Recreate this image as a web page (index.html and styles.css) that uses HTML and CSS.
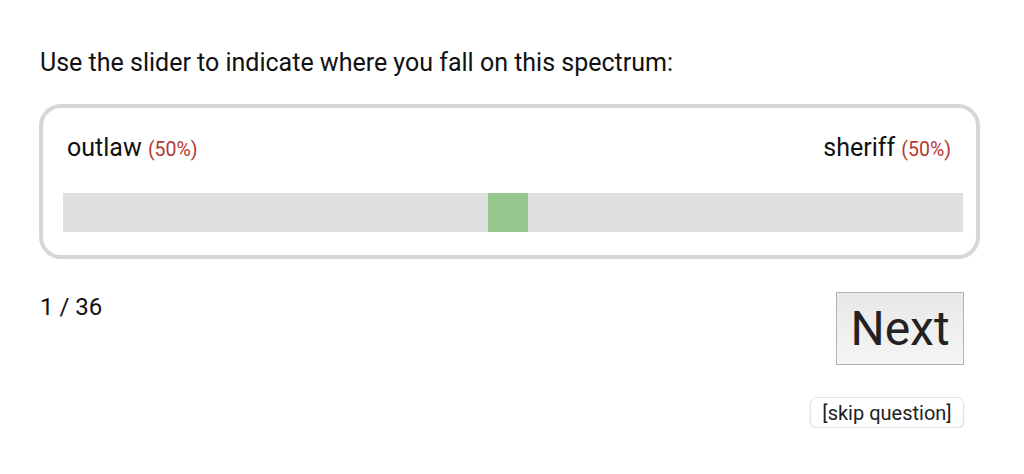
FILE: index.html
```html
<!DOCTYPE html>
<html>
<head>
<meta charset="utf-8">
<link rel="stylesheet" href="styles.css">
</head>
<body>
<div class="page">
  <p class="prompt">Use the slider to indicate where you fall on this spectrum:</p>
  <div class="card">
    <div class="labels">
      <span class="label">outlaw <span class="pct">(50%)</span></span>
      <span class="label">sheriff <span class="pct">(50%)</span></span>
    </div>
    <div class="track">
      <div class="thumb" style="margin-left: 425px"></div>
    </div>
  </div>
  <div class="footer">
    <div class="counter">1 / 36</div>
    <div class="actions">
      <button class="next">Next</button>
      <button class="skip">[skip question]</button>
    </div>
  </div>
</div>
</body>
</html>
```

FILE: styles.css
```css
html, body {
  margin: 0;
  padding: 0;
  background: #ffffff;
}

body {
  font-family: Roboto, "Liberation Sans", Arial, sans-serif;
  color: #111111;
}

.page {
  padding: 48px 0 0 39px;
  width: 941px;
}

.prompt {
  margin: 0 0 26px 1px;
  font-size: 25px;
  line-height: 30px;
}

.card {
  border: 4px solid #d6d6d6;
  border-radius: 22px;
  padding: 25px 13px 23px 20px;
}

.labels {
  display: flex;
  justify-content: space-between;
  padding: 0 12px 0 4px;
  margin-bottom: 30px;
  height: 30px;
}

.label {
  font-size: 25px;
  line-height: 30px;
}

.pct {
  color: #b3392f;
  font-size: 19.5px;
}

.track {
  height: 39px;
  background: #dfdfdf;
  display: flex;
}

.thumb {
  width: 40px;
  height: 39px;
  background: #95c68c;
}

.footer {
  display: flex;
  justify-content: space-between;
  align-items: flex-start;
  padding: 33px 16px 0 1px;
}

.counter {
  font-size: 24px;
  line-height: 28px;
  margin-top: 1px;
}

.actions {
  display: flex;
  flex-direction: column;
  align-items: flex-end;
  gap: 32px;
}

.next {
  width: 128px;
  height: 73px;
  padding: 0;
  border: 1px solid #b3b3b3;
  border-radius: 0;
  background: linear-gradient(#e8e8e8, #f5f5f5);
  font-family: Roboto, "Liberation Sans", Arial, sans-serif;
  font-size: 48px;
  color: #222222;
}

.skip {
  width: 154px;
  height: 31px;
  padding: 0;
  border: 1px solid #e2e2e2;
  border-radius: 7px;
  background: #ffffff;
  box-shadow: 0 1px 2px rgba(0, 0, 0, 0.12);
  font-family: Roboto, "Liberation Sans", Arial, sans-serif;
  font-size: 20px;
  color: #222222;
}
```
